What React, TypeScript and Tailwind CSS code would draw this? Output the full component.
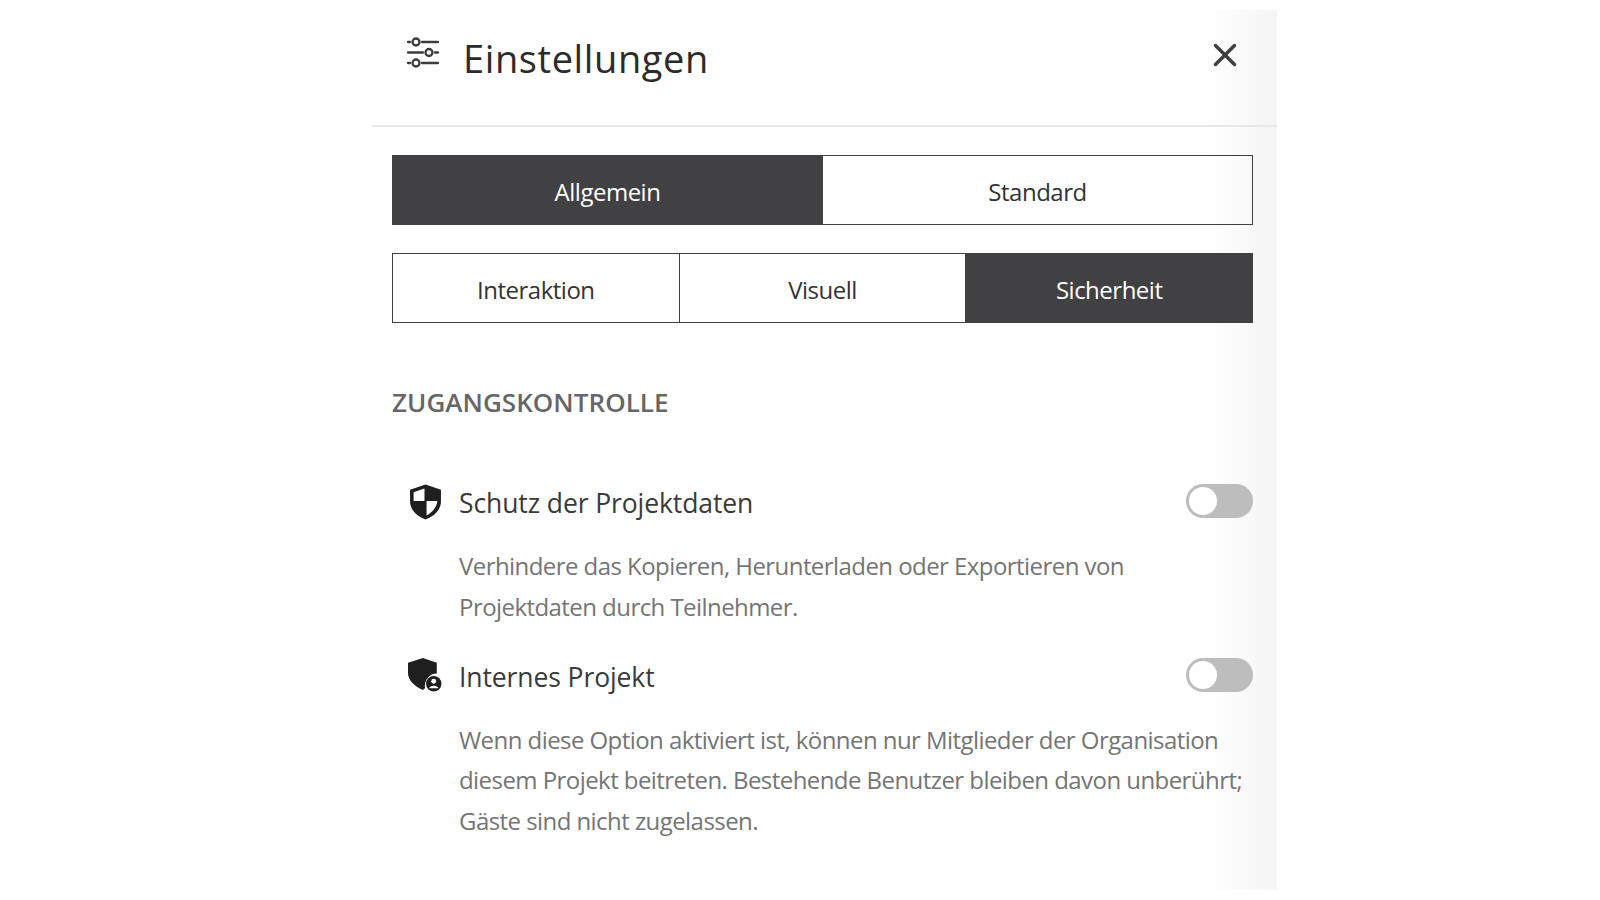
import { X } from 'lucide-react';

const font = "font-['Open_Sans','Noto_Sans',sans-serif]";

const Toggle = () => (
  <div className="mb-[6px] h-[34px] w-[67px] shrink-0 rounded-full bg-[#bdbdbd] p-[3px]">
    <div className="h-[28px] w-[28px] rounded-full bg-white" />
  </div>
);

const SlidersIcon = () => (
  <svg width="34" height="34" viewBox="0 0 34 34" fill="none" stroke="#3c3c3c" strokeWidth="2.3" strokeLinecap="round">
    <path d="M2 6h2M16 6h16M2 16.500h15M29 16.500h3M2 27h2M16 27h16" />
    <circle cx="10" cy="6" r="3.500" />
    <circle cx="23" cy="16.500" r="3.500" />
    <circle cx="10" cy="27" r="3.500" />
  </svg>
);

const ShieldIcon = () => (
  <svg width="33" height="38" viewBox="0 0 32 36">
    <path d="M16 1 L31 6 V17 C31 26 24 32 16 35 C8 32 1 26 1 17 V6 Z" fill="#1f1f1f" />
    <path d="M15 5 V17 H4.500 V8.500 Z" fill="#fff" />
    <path d="M17 17 H27.500 C27 23 22.500 28 17 31 Z" fill="#fff" />
  </svg>
);

const ShieldUserIcon = () => (
  <svg width="35" height="35" viewBox="0 0 34 34">
    <path d="M14.500 0 L28 4.500 V15 C21 15 15.500 21 16.500 29.500 L14.500 31 C6 27 0 22 0 14 V4.500 Z" fill="#1f1f1f" />
    <circle cx="25" cy="25" r="7.500" fill="#1f1f1f" />
    <circle cx="25" cy="22.500" r="2.400" fill="#fff" />
    <path d="M20.500 29.500 C21 26 29 26 29.500 29.500 Z" fill="#fff" />
  </svg>
);

const Tab = ({ label, active, last }: { label: string; active?: boolean; last?: boolean }) => (
  <div
    className={`flex flex-1 items-center justify-center pt-[3px] text-[24px] tracking-[-0.5px] ${
      active ? 'bg-[#414143] text-white' : 'text-[#333]'
    } ${last ? '' : 'border-r border-[#414143]'}`}
  >
    {label}
  </div>
);

interface ISettingProps {
  icon: React.ReactNode;
  title: string;
  lines: string[];
}

const Setting = ({ icon, title, lines }: ISettingProps) => (
  <div>
    <div className="flex h-[40px] items-center">
      <div className="mb-[5px] flex w-[67px] justify-center">{icon}</div>
      <p className="flex-1 text-[26.5px] tracking-[-0.1px] text-[#3a3a3a]">{title}</p>
      <Toggle />
    </div>
    <div className="mt-[22px] pl-[67px] text-[24px] leading-[40.8px] tracking-[-0.56px] text-[#757575]">
      {lines.map((line) => (
        <p key={line} className="whitespace-nowrap">
          {line}
        </p>
      ))}
    </div>
  </div>
);

export default function App() {
  return (
    <div className={`flex h-[900px] w-[1600px] justify-center bg-white py-[10px] pl-[49px] ${font}`}>
      <div className="h-[880px] w-[905px] bg-[linear-gradient(90deg,#ffffff_92%,#f5f5f5_100%)]">
        {/* Header */}
        <div className="flex h-[117px] items-center justify-between border-b-2 border-[#e8e8e8] pr-[33px] pb-[19px] pl-[34px]">
          <div className="flex items-center gap-[23px]">
            <div className="mb-[10px]">
              <SlidersIcon />
            </div>
            <h1 className="text-[38px] tracking-[0.6px] text-[#2b2b2b]">Einstellungen</h1>
          </div>
          <X size={38} strokeWidth={2.2} className="mb-[6px] text-[#3f3f3f]" />
        </div>

        <div className="pt-[28px] pr-[24px] pl-[20px]">
          {/* Tabs */}
          <div className="flex h-[70px] border border-[#414143]">
            <Tab label="Allgemein" active />
            <Tab label="Standard" last />
          </div>
          <div className="mt-[28px] flex h-[70px] border border-[#414143]">
            <Tab label="Interaktion" />
            <Tab label="Visuell" />
            <Tab label="Sicherheit" active last />
          </div>

          <h2 className="mt-[60px] text-[26px] font-semibold tracking-[0.05px] text-[#666]">ZUGANGSKONTROLLE</h2>

          <div className="mt-[62px] flex flex-col gap-[30px]">
            <Setting
              icon={<ShieldIcon />}
              title="Schutz der Projektdaten"
              lines={['Verhindere das Kopieren, Herunterladen oder Exportieren von', 'Projektdaten durch Teilnehmer.']}
            />
            <Setting
              icon={<ShieldUserIcon />}
              title="Internes Projekt"
              lines={[
                'Wenn diese Option aktiviert ist, können nur Mitglieder der Organisation',
                'diesem Projekt beitreten. Bestehende Benutzer bleiben davon unberührt;',
                'Gäste sind nicht zugelassen.',
              ]}
            />
          </div>
        </div>
      </div>
    </div>
  );
}
